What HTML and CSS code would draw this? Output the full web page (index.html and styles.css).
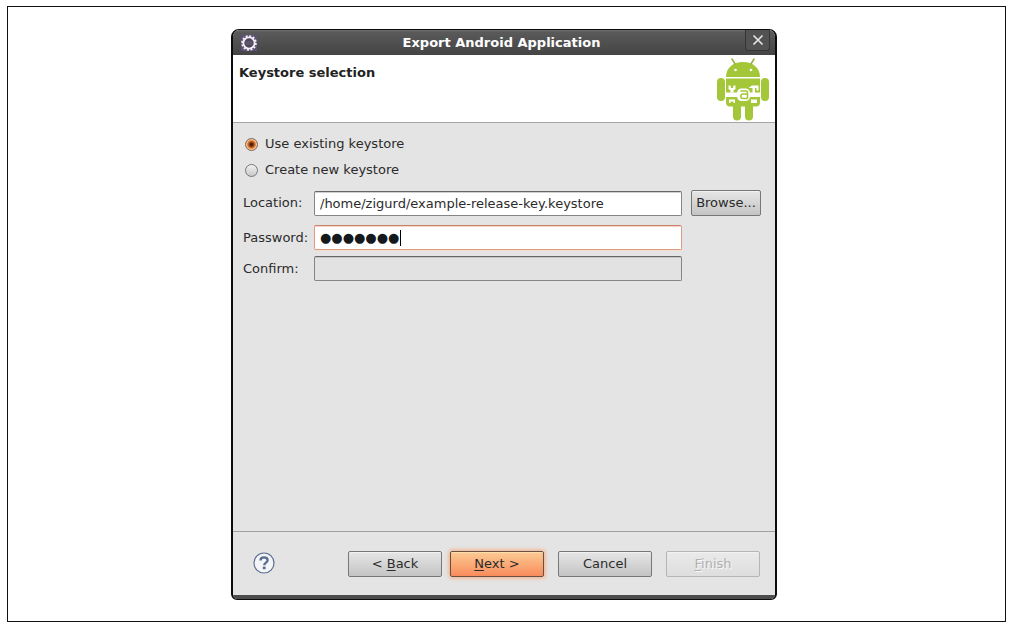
FILE: index.html
```html
<!DOCTYPE html>
<html lang="en">
<head>
<meta charset="utf-8">
<title>Export Android Application</title>
<link rel="stylesheet" href="styles.css">
</head>
<body>
<main class="figure">
  <form class="dialog">
    <header class="titlebar">
      <svg class="app-icon" viewBox="0 0 18 18" aria-hidden="true">
        <rect x="1" y="1" width="16" height="16" fill="#5d5175"/>
        <circle cx="9" cy="9" r="6.800" fill="none" stroke="#f3edf5" stroke-width="2" stroke-dasharray="2 1.560"/>
        <circle cx="9" cy="9" r="5.600" fill="#4b4658" stroke="#f3edf5" stroke-width="1.800"/>
        <path d="M5.500 8h7M5.500 10h7" stroke="#6f6680" stroke-width="1"/>
      </svg>
      <h1 class="title">Export Android Application</h1>
      <button type="button" class="close" aria-label="Close">
        <svg class="close-icon" viewBox="0 0 12 12" aria-hidden="true"><path d="M1.500 1.500l9 9M10.500 1.500l-9 9" stroke="#e4e4e4" stroke-width="1.700" fill="none"/></svg>
      </button>
    </header>
    <section class="banner">
      <h2 class="heading">Keystore selection</h2>
      <svg class="robot" viewBox="0 0 54 64" aria-hidden="true">
        <g fill="#a4c639">
          <path d="M10 20C10 11 17 5 27 5s17 6 17 15z"/>
          <rect x="1" y="21" width="8" height="23" rx="4"/>
          <rect x="45" y="21" width="8" height="23" rx="4"/>
          <path d="M10 21.500h34v24a4 4 0 0 1-4 4h-3v10a4 4 0 0 1-8 0v-10h-4v10a4 4 0 0 1-8 0v-10h-3a4 4 0 0 1-4-4z"/>
        </g>
        <path d="M19 7l-3-5M35 7l3-5" stroke="#93b040" stroke-width="1.500" stroke-linecap="round"/>
        <circle cx="19.500" cy="13" r="1.300" fill="#fff"/>
        <circle cx="35" cy="13" r="1.300" fill="#fff"/>
        <path d="M9 35.500h13v4.500H9zM32 35.500h13v4.500H32z" fill="#fff"/>
        <path d="M12.500 28.500h2l.500 2.500h2l.500-2.500h2v3.500l-2 1.500v2h-3v-2l-2-1.500zM33 30.500l3-2h6.500v5h-2v-2.500h-1.500v5h-2.500v-5h-3.500zM13 42.500h6v3.500h-1.500v-1.500h-3v1.500h-1.500zM35 42.500h6v3.500h-6z" fill="#fff"/>
        <rect x="21" y="31.500" width="13" height="12.500" rx="4.500" fill="#fff"/>
        <path d="M24.500 34h5.500q1.500 0 1.500 1.500v6M31 37h-4a2.200 2.200 0 0 0 0 4.400h4.500" fill="none" stroke="#a4c639" stroke-width="1.500"/>
      </svg>
    </section>
    <section class="content">
      <label class="choice"><input class="radio" type="radio" name="mode" checked>Use existing keystore</label>
      <label class="choice"><input class="radio" type="radio" name="mode">Create new keystore</label>
      <div class="fields">
        <div class="row row-location">
          <label for="location">Location:</label>
          <input class="field" id="location" type="text" value="/home/zigurd/example-release-key.keystore">
          <button type="button" class="button">Browse...</button>
        </div>
        <div class="row">
          <label for="password">Password:</label>
          <div class="secret">
            <input class="field field-active" id="password" type="text" value="●●●●●●●">
            <span class="caret"></span>
          </div>
        </div>
        <div class="row">
          <label for="confirm">Confirm:</label>
          <input class="field" id="confirm" type="password" disabled>
        </div>
      </div>
    </section>
    <footer class="actions">
      <button type="button" class="help" aria-label="Help">
        <svg class="help-icon" viewBox="0 0 22 22" aria-hidden="true">
          <circle cx="11" cy="11" r="10" fill="#f4f5f7" stroke="#5b6f8f" stroke-width="1.200"/>
          <path d="M7.500 8.600C7.500 6.200 9 5.300 11 5.300s3.600 1 3.600 3c0 2.300-3.400 2.400-3.400 4.900" fill="none" stroke="#566c91" stroke-width="2.300"/>
          <rect x="9.800" y="14.600" width="2.800" height="2.600" fill="#566c91"/>
        </svg>
      </button>
      <div class="steps">
        <button type="button" class="button">&lt; <u>B</u>ack</button>
        <button type="button" class="button button-primary"><u>N</u>ext &gt;</button>
      </div>
      <button type="button" class="button">Cancel</button>
      <button type="button" class="button" disabled><u>F</u>inish</button>
    </footer>
  </form>
</main>
</body>
</html>
```
FILE: styles.css
```css
* { box-sizing: border-box; }
body {
  margin: 0;
  padding: 6px 7px;
  background: #fff;
  color: #2b2b2b;
  font: 13px/18px "DejaVu Sans", sans-serif;
}
button, input { font: inherit; color: inherit; margin: 0; }
.figure {
  display: flex;
  justify-content: center;
  align-items: flex-start;
  min-height: calc(100vh - 12px);
  padding: 22px 5px 21px 0;
  border: 1px solid #111;
}
.dialog {
  display: flex;
  flex-direction: column;
  width: 100%;
  max-width: 546px;
  background: #e4e4e4;
  border: solid #0c0c0c;
  border-width: 1px 2px;
  border-radius: 8px 8px 6px 6px;
  overflow: hidden;
}
.dialog::after {
  content: "";
  height: 4px;
  background: #4c4c4c;
}
.titlebar {
  display: flex;
  align-items: center;
  height: 25px;
  padding: 0 5px 0 7px;
  background: linear-gradient(#707070, #5a5a5a 2px, #444);
}
.app-icon { width: 18px; height: 18px; }
.title {
  flex: 1;
  margin: 0;
  text-align: center;
  color: #fff;
  font-size: 13px;
}
.close {
  display: flex;
  align-items: center;
  justify-content: center;
  width: 25px;
  height: 21px;
  padding: 0;
  margin-bottom: 4px;
  background: #525252;
  border: 1px solid #353535;
  border-top: 0;
  border-radius: 0 0 3px 3px;
}
.close-icon { width: 12px; height: 12px; }
.banner {
  display: flex;
  justify-content: space-between;
  height: 67px;
  padding: 2px 5px 0 6px;
  background: #fff;
}
.heading { margin: 7px 0 0; font-size: 13px; color: #222; }
.robot { width: 54px; height: 64px; }
.content {
  min-height: 409px;
  padding: 8px 14px 0 10px;
  border-top: 1px solid #a5a5a5;
}
.choice {
  display: flex;
  align-items: center;
  gap: 7px;
  height: 26px;
  padding-left: 2px;
}
.radio {
  appearance: none;
  width: 13px;
  height: 13px;
  border: 1px solid #777;
  border-radius: 50%;
  background: linear-gradient(#f2f2f2, #c8c8c8);
}
.radio:checked {
  border-color: #806250;
  background: radial-gradient(circle, #49200e 1px, #c05a20 3px, #fac391 5px, #fde0c4);
}
.fields { display: grid; gap: 6px; padding-top: 7px; }
.row {
  display: grid;
  grid-template-columns: 71px 1fr 79px;
  align-items: center;
}
.row-location { margin-bottom: 3px; }
.row .button { margin-left: 9px; }
.field {
  display: block;
  width: 100%;
  height: 25px;
  padding: 0 5px;
  border: 1px solid #858585;
  border-top-color: #666;
  border-radius: 2px;
  background: #fff;
  box-shadow: inset 0 1px #d0d0d0;
}
.field:disabled { background: #e2e2e2; box-shadow: inset 0 1px #c4c4c4; }
.secret { position: relative; }
.field-active {
  border-color: #dd9a83;
  border-top-color: #cb7e67;
  box-shadow: inset 0 1px #f8d9cd, 0 1px #f3ddcc;
  color: #15181c;
  outline: none;
}
.caret {
  position: absolute;
  left: 86px;
  top: 5px;
  width: 1px;
  height: 16px;
  background: #000;
}
.button {
  height: 26px;
  padding: 0;
  border: 1px solid #777;
  border-radius: 2px;
  background: linear-gradient(#e6e6e6, #c4c4c4);
  box-shadow: inset 0 1px #f2f2f2;
}
.button-primary {
  border-color: #6a5040;
  background: linear-gradient(#fccb94, #f98c5c);
  box-shadow: inset 0 1px #fddcae, 0 0 4px 1px #f4ab80;
}
.button:disabled {
  border-color: #b5b5b5;
  background: linear-gradient(#eaeaea, #dedede);
  color: #b0b0b0;
  text-shadow: 1px 1px #f8f8f8;
}
.actions {
  display: flex;
  align-items: center;
  gap: 14px;
  height: 64px;
  padding: 1px 15px 0 20px;
  border-top: 1px solid #a0a0a0;
}
.actions .button { width: 94px; }
.help {
  display: flex;
  padding: 0 0 2px;
  margin-right: auto;
  border: 0;
  background: none;
}
.help-icon { width: 22px; height: 22px; }
.steps { display: flex; gap: 8px; }
u { text-underline-offset: 2px; }
```
